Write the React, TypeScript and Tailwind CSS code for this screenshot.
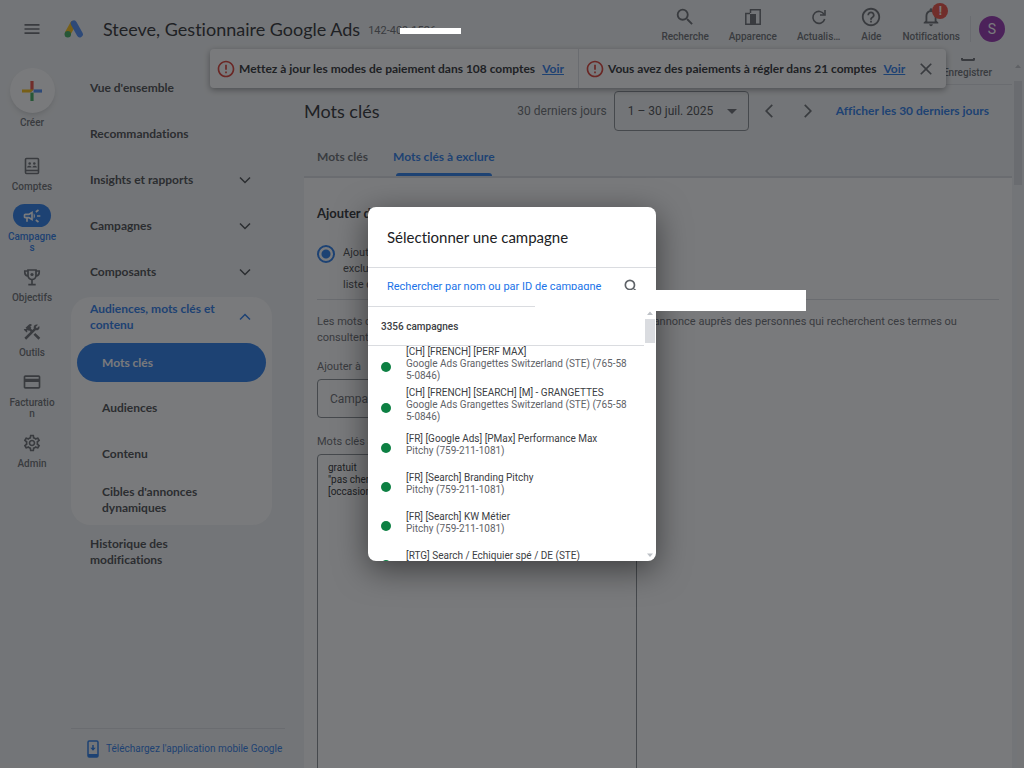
import clsx from "clsx";
import { ReactNode } from "react";
import {
  MdArrowDropDown,
  MdArrowBackIosNew,
  MdArrowForwardIos,
  MdClose,
  MdErrorOutline,
  MdHelpOutline,
  MdMenu,
  MdNotificationsNone,
  MdOutlineCampaign,
  MdOutlineConstruction,
  MdOutlineCreditCard,
  MdOutlineSettings,
  MdSearch,
} from "react-icons/md";

interface Campaign {
  name: string;
  account: string;
  tall?: boolean;
}

const campaigns: Campaign[] = [
  { name: "[CH] [FRENCH] [PERF MAX]", account: "Google Ads Grangettes Switzerland (STE) (765-585-0846)", tall: true },
  {
    name: "[CH] [FRENCH] [SEARCH] [M] - GRANGETTES",
    account: "Google Ads Grangettes Switzerland (STE) (765-585-0846)",
    tall: true,
  },
  { name: "[FR] [Google Ads] [PMax] Performance Max", account: "Pitchy (759-211-1081)" },
  { name: "[FR] [Search] Branding Pitchy", account: "Pitchy (759-211-1081)" },
  { name: "[FR] [Search] KW Métier", account: "Pitchy (759-211-1081)" },
  { name: "[RTG] Search / Echiquier spé / DE (STE)", account: "" },
];

function AdsLogo() {
  return (
    <svg viewBox="0 0 20 18" className="h-[18px] w-5" aria-label="Google Ads">
      <path d="M9 4 4 13" stroke="#fbbc04" strokeWidth="6" strokeLinecap="round" />
      <path d="M9.8 3.4 15.8 14.2" stroke="#4285f4" strokeWidth="6.2" strokeLinecap="round" />
      <circle cx="3.8" cy="14.2" r="3.2" fill="#34a853" />
    </svg>
  );
}

function PlusIcon() {
  return (
    <svg viewBox="0 0 20 20" className="size-5">
      <path d="M8.4 0h3.2v8.4L8.4 11.6z" fill="#ea4335" />
      <path d="M20 8.4v3.2h-8.4V8.4z" fill="#4285f4" />
      <path d="M8.4 20h3.2v-8.4H8.4z" fill="#34a853" />
      <path d="M0 8.4v3.2h8.4l3.2-3.2z" fill="#fbbc04" />
    </svg>
  );
}

function AccountsIcon() {
  return (
    <svg viewBox="0 0 16 18" className="h-[18px] w-4" fill="none" stroke="currentColor" strokeWidth="1.6">
      <rect x="1.5" y="1.5" width="13" height="15" rx="1" />
      <path d="M1.5 13.5h13" />
      <path d="M3 10.6c0-2.4 4.6-2.4 4.6 0zM8.4 10.6c0-2.4 4.6-2.4 4.6 0z" fill="currentColor" stroke="none" />
      <circle cx="5.7" cy="6.5" r="1.3" fill="currentColor" stroke="none" />
      <circle cx="10.3" cy="6.5" r="1.3" fill="currentColor" stroke="none" />
    </svg>
  );
}

function TrophyIcon() {
  return (
    <svg viewBox="0 0 18 18" className="size-[18px]" fill="none" stroke="currentColor" strokeWidth="1.7">
      <path d="M5 2h8v5.5a4 4 0 0 1-8 0z" />
      <path d="M5 3H1.8v1.5C1.8 6.5 3 7.8 5 8M13 3h3.2v1.5c0 2-1.2 3.300-3.2 3.5M9 11.5v5M5.3 16.6h7.4" />
      <circle cx="9" cy="6.5" r="1.6" fill="currentColor" stroke="none" />
    </svg>
  );
}

function AppearanceIcon() {
  return (
    <svg viewBox="0 0 18 18" className="size-[18px]" fill="none" stroke="currentColor" strokeWidth="1.5">
      <path d="M6.500 5V1.800h9.700v14.400H12M6 5.500H1.800v10.700H6" />
      <rect x="6" y="6" width="6" height="11" fill="currentColor" stroke="none" />
    </svg>
  );
}

function RefreshIcon() {
  return (
    <svg viewBox="0 0 18 18" className="size-[18px]" fill="none" stroke="currentColor" strokeWidth="1.6">
      <path d="M14.2 6.5A6 6 0 1 0 14.7 11" />
      <path d="M15 2v5h-5" />
    </svg>
  );
}

function PhoneIcon() {
  return (
    <svg viewBox="0 0 12 18" className="h-[18px] w-3 shrink-0" fill="none" stroke="currentColor" strokeWidth="1.5">
      <rect x="1" y="1" width="10" height="16" rx="1.2" />
      <path d="M1 15.500h10" strokeWidth="3" />
      <path d="M6 5v5" />
      <path d="M3.300 7.800h5.400L6 10.800z" fill="currentColor" stroke="none" />
    </svg>
  );
}

function Chevron({ up }: { up?: boolean }) {
  return (
    <svg viewBox="0 0 14 14" className="size-3.5" fill="none" stroke="currentColor" strokeWidth="1.5">
      <path d={up ? "M2 9.500 7 4.500l5 5" : "M2 4.500l5 5 5-5"} />
    </svg>
  );
}

function ScrollArrow({ down }: { down?: boolean }) {
  return (
    <svg viewBox="0 0 12 12" className="size-3 fill-[#bdc1c6]">
      <path d={down ? "M3 4.500h6L6 8z" : "M3 8h6L6 4.500z"} />
    </svg>
  );
}

function HeaderAction({ icon, label, badge }: { icon: ReactNode; label: string; badge?: boolean }) {
  return (
    <button className="relative flex flex-col items-center">
      <span className="flex h-5 items-center text-[22px]">{icon}</span>
      <span className="mt-0.5 text-[10px] leading-4 font-medium">{label}</span>
      {badge && (
        <span className="absolute -top-1 left-[30px] flex size-4 items-center justify-center rounded-full bg-[#ea4335] text-xs font-bold text-white">
          !
        </span>
      )}
    </button>
  );
}

function Header() {
  return (
    <header className="flex h-[58px] shrink-0 items-center pr-[19px] pl-[22px] text-[#5f6368]">
      <button aria-label="Menu principal" className="text-xl">
        <MdMenu />
      </button>
      <div className="mr-[19px] ml-[22px]">
        <AdsLogo />
      </div>
      <h1 className="font-[Lato,sans-serif] text-lg whitespace-nowrap text-[#202124]">Steeve, Gestionnaire Google Ads</h1>
      <span className="mt-1 ml-2 text-[11px] whitespace-nowrap">142-409-1526</span>
      <div className="ml-auto flex items-center gap-5 pb-1.5">
        <HeaderAction icon={<MdSearch />} label="Recherche" />
        <HeaderAction icon={<AppearanceIcon />} label="Apparence" />
        <HeaderAction icon={<RefreshIcon />} label="Actualis…" />
        <HeaderAction icon={<MdHelpOutline />} label="Aide" />
        <HeaderAction icon={<MdNotificationsNone />} label="Notifications" badge />
      </div>
      <button className="ml-2.5 border-l border-[#dadce0] pl-2" aria-label="Compte">
        <span className="flex size-[26px] items-center justify-center rounded-full bg-[#8e24aa] text-sm text-white">S</span>
      </button>
    </header>
  );
}

function RailItem({
  icon,
  label,
  active,
  className,
}: {
  icon: ReactNode;
  label: string;
  active?: boolean;
  className?: string;
}) {
  return (
    <button className={clsx("flex w-[50px] flex-col items-center", active ? "text-[#1a73e8]" : "text-[#5f6368]", className)}>
      <span
        className={clsx(
          "flex h-[23px] w-[38px] items-center justify-center rounded-full text-xl",
          active && "bg-[#1a73e8] text-white",
        )}
      >
        {icon}
      </span>
      <span className="mt-1 w-full text-center text-[10px] leading-[11px] font-medium break-all">{label}</span>
    </button>
  );
}

function Rail() {
  return (
    <aside className="flex w-[71px] shrink-0 flex-col items-start pt-[10px] pl-[7px]">
      <button className="flex w-[50px] flex-col items-center gap-1 text-[#5f6368]">
        <span className="flex size-[45px] items-center justify-center rounded-full bg-white shadow-md">
          <PlusIcon />
        </span>
        <span className="text-[10px] leading-3 font-medium">Créer</span>
      </button>
      <RailItem icon={<AccountsIcon />} label="Comptes" className="mt-[25px]" />
      <RailItem icon={<MdOutlineCampaign />} label="Campagnes" active className="mt-[12px]" />
      <RailItem icon={<TrophyIcon />} label="Objectifs" className="mt-[12px]" />
      <RailItem icon={<MdOutlineConstruction />} label="Outils" className="mt-[17px]" />
      <RailItem icon={<MdOutlineCreditCard />} label="Facturation" className="mt-[12px]" />
      <RailItem icon={<MdOutlineSettings />} label="Admin" className="mt-[12px]" />
    </aside>
  );
}

function NavItem({ label, expandable }: { label: string; expandable?: boolean }) {
  return (
    <button className="flex h-[46px] items-center justify-between pr-5 pl-[19px] text-left">
      <span>{label}</span>
      {expandable && <Chevron />}
    </button>
  );
}

function SideNav() {
  return (
    <nav className="flex w-[233px] shrink-0 flex-col font-[Lato,sans-serif] text-xs leading-4 font-bold text-[#3c4043]">
      <div className="mr-8 flex flex-col pt-[7px]">
        <NavItem label="Vue d'ensemble" />
        <NavItem label="Recommandations" />
        <NavItem label="Insights et rapports" expandable />
        <NavItem label="Campagnes" expandable />
        <NavItem label="Composants" expandable />
        <div className="mt-0.5 flex flex-col rounded-[20px] bg-white px-1.5 pt-1 pb-[9px]">
          <button className="mb-2.5 flex items-center justify-between pr-3.5 pl-[13px] text-left text-[#1a73e8]">
            <span className="w-[140px]">Audiences, mots clés et contenu</span>
            <Chevron up />
          </button>
          <a href="#mots-cles" className="flex h-[39px] items-center rounded-full bg-[#1a73e8] pl-[25px] text-white">
            Mots clés
          </a>
          <a href="#audiences" className="mt-[3px] flex h-[46px] items-center pl-[25px]">
            Audiences
          </a>
          <a href="#contenu" className="flex h-[46px] items-center pl-[25px]">
            Contenu
          </a>
          <a href="#cibles" className="mt-[7px] w-[150px] pl-[25px]">
            Cibles d'annonces dynamiques
          </a>
        </div>
        <button className="mt-[11px] w-[150px] pl-[19px] text-left">Historique des modifications</button>
      </div>
      <a
        href="#app"
        className="mt-auto mr-[19px] flex h-10 items-center gap-[7px] border-t border-[#dadce0] pl-4 font-[Roboto,sans-serif] text-[10px] font-normal whitespace-nowrap text-[#1a73e8]"
      >
        <PhoneIcon />
        Téléchargez l'application mobile Google
      </a>
    </nav>
  );
}

function PageHeading() {
  return (
    <div className="flex h-[52px] shrink-0 items-center pr-[23px] whitespace-nowrap">
      <h2 className="font-[Lato,sans-serif] text-lg text-[#202124]">Mots clés</h2>
      <div className="ml-auto flex items-center">
        <span className="mr-[7px] text-xs text-[#5f6368]">30 derniers jours</span>
        <button className="flex h-10 w-[135px] items-center justify-between rounded border border-[#80868b] pr-1 pl-[13px] text-xs text-[#3c4043]">
          1 – 30 juil. 2025
          <MdArrowDropDown className="text-2xl text-[#5f6368]" />
        </button>
        <button aria-label="Période précédente" className="ml-3 text-base text-[#5f6368]">
          <MdArrowBackIosNew />
        </button>
        <button aria-label="Période suivante" className="mr-5 ml-[23px] text-base text-[#5f6368]">
          <MdArrowForwardIos />
        </button>
        <button className="font-[Lato,sans-serif] text-xs font-bold text-[#1a73e8]">Afficher les 30 derniers jours</button>
      </div>
    </div>
  );
}

function KeywordForm() {
  return (
    <section className="flex-1 bg-white px-[13px] pt-[26px] text-[11px] leading-4 text-[#5f6368]">
      <h3 className="w-fit font-[Lato,sans-serif] text-[13px] leading-[18px] font-bold text-[#202124]">
        Ajouter des mots clés à exclure
      </h3>
      <label className="mt-[23px] flex w-fit gap-2 text-[#3c4043]">
        <input
          type="radio"
          defaultChecked
          className="size-[18px] shrink-0 appearance-none rounded-full border-2 border-[#1a73e8] bg-white bg-radial from-[#1a73e8] from-[4px] to-transparent to-[5px]"
        />
        <span>
          Ajouter des mots clés à
          <br />
          exclure ou créer une
          <br />
          liste de mots clés
        </span>
      </label>
      <hr className="mt-[6px] border-[#dadce0]" />
      <p className="mt-[14px]">
        Les mots clés à exclure vous permettront de ne jamais diffuser votre annonce auprès des personnes qui recherchent
        ces termes ou consultent ces pages
      </p>
      <label htmlFor="target" className="mt-[13px] block">
        Ajouter à
      </label>
      <select
        id="target"
        className="mt-1 block h-[39px] w-[320px] appearance-none rounded border border-[#80868b] px-3 text-xs text-[#5f6368]"
      >
        <option>Campagne</option>
      </select>
      <label htmlFor="keywords" className="mt-4 block">
        Mots clés à exclure
      </label>
      <textarea
        id="keywords"
        className="mt-1 block h-[400px] w-[320px] resize-none rounded border border-[#80868b] px-2.5 py-[7px] text-[10px] leading-3 text-[#202124]"
        defaultValue={'gratuit\n"pas cher"\n[occasion]'}
      />
    </section>
  );
}

function Main() {
  return (
    <main className="flex min-w-0 flex-1 flex-col overflow-hidden">
      <div className="flex h-[27px] shrink-0 flex-col items-end border-b border-[#dadce0] pr-5 text-[#5f6368]">
        <span className="mr-[17px] h-[3px] w-3.5 rounded-b-xs border-2 border-t-0 border-[#5f6368]" />
        <button className="mt-1 text-[10px] leading-4 font-medium">Enregistrer</button>
      </div>
      <PageHeading />
      <div
        role="tablist"
        className="flex h-[41px] shrink-0 gap-[25px] border-b-2 border-[#dadce0] px-[13px] font-[Lato,sans-serif] text-xs font-bold text-[#5f6368]"
      >
        <button role="tab">Mots clés</button>
        <button role="tab" aria-selected="true" className="flex flex-col items-center text-[#1a73e8]">
          <span className="flex flex-1 items-center">Mots clés à exclure</span>
          <span className="-mt-[3px] h-[3px] w-24 rounded-t bg-[#1a73e8]" />
        </button>
      </div>
      <KeywordForm />
    </main>
  );
}

function Alert({ text }: { text: string }) {
  return (
    <div className="flex items-center whitespace-nowrap">
      <MdErrorOutline className="text-xl text-[#d93025]" />
      <span className="ml-[3px]">{text}</span>
      <a href="#voir" className="ml-[7px] text-[#1a73e8] underline">
        Voir
      </a>
    </div>
  );
}

function AlertBar() {
  return (
    <div className="absolute top-[49px] left-[210px] flex h-[39px] w-[736px] rounded bg-white font-[Lato,sans-serif] text-xs font-bold text-[#202124] shadow-[0_2px_6px_rgba(0,0,0,0.4)]">
      <div className="flex w-[369px] border-r border-[#dadce0] pl-1.5">
        <Alert text="Mettez à jour les modes de paiement dans 108 comptes" />
      </div>
      <div className="flex flex-1 items-center justify-between pr-2.5 pl-1.5">
        <Alert text="Vous avez des paiements à régler dans 21 comptes" />
        <button aria-label="Fermer" className="text-xl text-[#5f6368]">
          <MdClose />
        </button>
      </div>
    </div>
  );
}

function CampaignDialog() {
  return (
    <div
      role="dialog"
      aria-labelledby="dialog-title"
      className="flex h-[354px] w-[288px] flex-col overflow-hidden rounded-lg bg-white shadow-[0_8px_32px_rgba(0,0,0,0.5)]"
    >
      <h2
        id="dialog-title"
        className="flex h-[60px] shrink-0 items-center px-[19px] font-[Lato,sans-serif] text-[15px] text-[#202124]"
      >
        Sélectionner une campagne
      </h2>
      <div className="flex h-10 shrink-0 items-center border-y border-[#dadce0] pr-3.5 pl-[19px]">
        <input
          type="text"
          aria-label="Rechercher une campagne"
          placeholder="Rechercher par nom ou par ID de campagne"
          className="min-w-0 flex-1 text-[11px] outline-none placeholder:text-[#1a73e8]"
        />
        <MdSearch className="text-xl text-[#5f6368]" />
      </div>
      <div className="flex min-h-0 flex-1">
        <div className="flex min-w-0 flex-1 flex-col">
          <div className="flex h-[39px] shrink-0 items-center border-b border-[#dadce0] px-[13px] text-[10px] font-medium text-[#3c4043]">
            3356 campagnes
          </div>
          <ul className="min-h-0 flex-1 overflow-hidden">
            {campaigns.map((campaign, index) => (
              <li
                key={campaign.name}
                className={clsx(
                  "flex items-center gap-[15px] pr-[15px] pl-[13px] text-[10px] leading-[12px]",
                  campaign.tall ? "h-[41px]" : "h-[39px]",
                  index === 0 && "-mt-[3px]",
                )}
              >
                <span className="mt-1.5 size-[10px] shrink-0 rounded-full bg-[#0d8043]" />
                <div className="text-[#5f6368]">
                  <p className="whitespace-nowrap text-[#3c4043]">{campaign.name}</p>
                  <p className="min-h-3 break-all">{campaign.account}</p>
                </div>
              </li>
            ))}
          </ul>
        </div>
        <div className="flex w-3 flex-col items-center justify-between">
          <div className="flex flex-col items-center">
            <ScrollArrow />
            <div className="h-6 w-[10px] bg-[#dadce0]" />
          </div>
          <ScrollArrow down />
        </div>
      </div>
    </div>
  );
}

export default function App() {
  return (
    <div className="relative flex h-screen flex-col overflow-hidden bg-[#f1f3f4] font-[Roboto,sans-serif] [font-variant-ligatures:none]">
      <Header />
      <div className="flex min-h-0 flex-1">
        <Rail />
        <SideNav />
        <Main />
        <div className="flex w-3 shrink-0 flex-col items-center">
          <div className="pt-0.5">
            <ScrollArrow />
          </div>
          <div className="mt-[9px] h-[104px] w-2 bg-[#dadce0]" />
        </div>
      </div>
      <AlertBar />
      <div className="absolute inset-0 flex items-center justify-center bg-[#202124]/60">
        <CampaignDialog />
      </div>
      <div className="absolute top-[28px] left-[400px] h-1.5 w-[61px] bg-white" />
      <div className="absolute top-[290px] left-[535px] h-[21px] w-[271px] bg-white" />
    </div>
  );
}
